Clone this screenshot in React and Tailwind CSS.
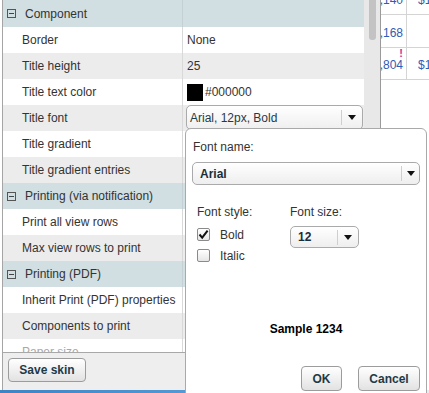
import React from 'react';

// ================= DATA =================
const rows = [
  { header: true, label: 'Component', first: true },
  { label: 'Border', value: 'None' },
  { label: 'Title height', value: '25', shade: true },
  { label: 'Title text color', swatch: true },
  { label: 'Title font', select: true, shade: true },
  { label: 'Title gradient' },
  { label: 'Title gradient entries', shade: true },
  { header: true, label: 'Printing (via notification)' },
  { label: 'Print all view rows' },
  { label: 'Max view rows to print', shade: true },
  { header: true, label: 'Printing (PDF)' },
  { label: 'Inherit Print (PDF) properties' },
  { label: 'Components to print', shade: true },
  { label: 'Paper size', faded: true },
];

const tableRows = [
  { a: ',140', b: '$1' },
  { a: ',168', b: '' },
  { a: ',804', b: '$1', flag: true },
];

function Arrow() {
  return (
    <svg width="8" height="5" viewBox="0 0 8 5">
      <polygon points="0,0 8,0 4,5" fill="#111" />
    </svg>
  );
}

function Checkbox({ checked }) {
  return (
    <div className="w-[13px] h-[13px] border border-[#8a8a8a] rounded-[2px] bg-gradient-to-b from-white to-[#e6e6e6] flex items-center justify-center">
      {checked && (
        <svg width="11" height="11" viewBox="0 0 11 11">
          <path d="M1.5 5.5 L4.2 8.6 L9.6 1.6" stroke="#111" strokeWidth="2" fill="none" />
        </svg>
      )}
    </div>
  );
}

function Button({ children, className }) {
  return (
    <div
      className={`flex items-center justify-center border border-[#9c9c9c] rounded-[4px] bg-gradient-to-b from-white to-[#e2e2e2] font-bold text-[#1e3a47] ${className}`}
    >
      {children}
    </div>
  );
}

export default function App() {
  return (
    <div className="w-[429px] h-[393px] overflow-hidden bg-white flex flex-col font-['Liberation_Sans',Arial,sans-serif] text-[12px] leading-[14px] text-[#333]">

      {/* MAIN AREA */}
      <div className="h-[390px] relative flex">

        {/* PROPERTY PANEL */}
        <div className="ml-[2px] w-[379px] flex flex-col border-l border-[#a5a5a5]">

          <div className="h-[352px] flex overflow-hidden">

            {/* LIST */}
            <div className="w-[361px] flex flex-col">
              {rows.map((row) =>
                row.header ? (
                  <div
                    key={row.label}
                    className={`${row.first ? 'h-[27px]' : 'h-[26px]'} shrink-0 flex bg-[#d1dee2]`}
                  >
                    <div className="w-[180px] flex items-center border-r border-[#c4d0d4]">
                      <div className="ml-[4px] w-[9px] h-[9px] border border-[#555] flex items-center justify-center">
                        <div className="w-[5px] h-[1px] bg-[#444]"></div>
                      </div>
                      <span className="ml-[9px]">{row.label}</span>
                    </div>
                  </div>
                ) : (
                  <div
                    key={row.label}
                    className={`h-[26px] shrink-0 flex ${row.shade ? 'bg-[#ececec]' : 'bg-white'}`}
                  >
                    <div
                      className={`w-[180px] flex items-center pl-[19px] border-r border-[#d9d9d9] ${row.faded ? 'text-[#a8a8a8]' : ''}`}
                    >
                      {row.label}
                    </div>
                    <div className="flex-1 flex items-center pl-[4px]">
                      {row.value}
                      {row.swatch && (
                        <>
                          <div className="w-[16px] h-[17px] bg-black"></div>
                          <span className="ml-[2px]">#000000</span>
                        </>
                      )}
                      {row.select && (
                        <div className="self-start w-[177px] h-[25px] -ml-[1px] border border-[#aaa] rounded-[5px] bg-gradient-to-b from-white to-[#efefef] flex items-center text-[#1f3b48]">
                          <span className="pl-[3px] flex-1">Arial, 12px, Bold</span>
                          <div className="w-[1px] h-[15px] bg-[#cfcfcf]"></div>
                          <div className="w-[20px] flex justify-center">
                            <Arrow />
                          </div>
                        </div>
                      )}
                    </div>
                  </div>
                )
              )}
            </div>

            {/* SCROLLBAR */}
            <div className="w-[17px] bg-[#e8e8e8] border-r border-[#9a9a9a] flex justify-center">
              <div className="w-[7px] h-[40px] bg-[#c3c3c3] rounded-b-[3px]"></div>
            </div>

          </div>

          {/* BOTTOM BAR */}
          <div className="flex-1 bg-[#eeeeee] border-t border-[#a8a8a8] pt-[5px] pl-[5px]">
            <Button className="w-[78px] h-[24px]">Save skin</Button>
          </div>

        </div>

        {/* RIGHT TABLE */}
        <div className="flex-1 overflow-hidden bg-white">
          <div className="mt-[-18px] flex flex-col">
            {tableRows.map((r, i) => (
              <div
                key={i}
                className={`flex ${i === 2 ? 'h-[32px]' : 'h-[33px]'} border-b border-[#d4d4d4]`}
              >
                <div className="w-[26px] shrink-0 border-r border-[#d4d4d4] flex flex-col items-end justify-end pb-[7px] pr-[3px] text-[#2f5cb4]">
                  {r.flag && (
                    <span className="text-[#cc3399] font-bold text-[11px] leading-[10px]">!</span>
                  )}
                  <span>{r.a}</span>
                </div>
                <div className="flex-1 flex items-end pb-[7px] pl-[11px] text-[#2f5cb4] whitespace-nowrap">
                  <span>{r.b}</span>
                </div>
              </div>
            ))}
          </div>
        </div>

        {/* FONT POPUP */}
        <div className="absolute left-[185px] top-[128px] w-[242px] h-[280px] bg-white border border-[#a9a9a9] rounded-t-[6px] flex flex-col px-[6px] pt-[11px]">

          <div className="h-[14px] pl-[1px]">Font name:</div>

          <div className="mt-[8px] h-[23px] shrink-0 border border-[#aaa] rounded-[5px] bg-gradient-to-b from-white to-[#eeeeee] flex items-center font-bold text-[#1a2e3a]">
            <span className="pl-[7px] flex-1">Arial</span>
            <div className="w-[1px] h-[15px] bg-[#cfcfcf]"></div>
            <div className="w-[17px] flex justify-center">
              <Arrow />
            </div>
          </div>

          <div className="mt-[20px] flex pl-[5px]">

            {/* FONT STYLE */}
            <div className="w-[93px] flex flex-col">
              <div className="h-[14px]">Font style:</div>
              <div className="mt-[9px] h-[13px] flex items-center">
                <Checkbox checked />
                <span className="ml-[10px]">Bold</span>
              </div>
              <div className="mt-[8px] h-[13px] flex items-center">
                <Checkbox />
                <span className="ml-[10px]">Italic</span>
              </div>
            </div>

            {/* FONT SIZE */}
            <div className="flex flex-col">
              <div className="h-[14px]">Font size:</div>
              <div className="mt-[7px] w-[69px] h-[22px] border border-[#aaa] rounded-[5px] bg-gradient-to-b from-white to-[#eeeeee] flex items-center font-bold text-[#1a2e3a]">
                <span className="pl-[7px] flex-1">12</span>
                <div className="w-[1px] h-[15px] bg-[#cfcfcf]"></div>
                <div className="w-[20px] flex justify-center">
                  <Arrow />
                </div>
              </div>
            </div>

          </div>

          <div className="mt-[60px] h-[14px] text-center font-bold text-black">
            Sample 1234
          </div>

          <div className="mt-[30px] flex justify-end gap-[16px]">
            <Button className="w-[41px] h-[25px]">OK</Button>
            <Button className="w-[62px] h-[25px]">Cancel</Button>
          </div>

        </div>

      </div>

      {/* TASKBAR EDGE */}
      <div className="h-[3px] flex">
        <div className="w-[245px] bg-gradient-to-r from-[#3d84c6] to-[#5b9fd9]"></div>
        <div className="w-[2px] bg-[#2a3a4a]"></div>
        <div className="flex-1 bg-[#e6ecf2]"></div>
      </div>

    </div>
  );
}
